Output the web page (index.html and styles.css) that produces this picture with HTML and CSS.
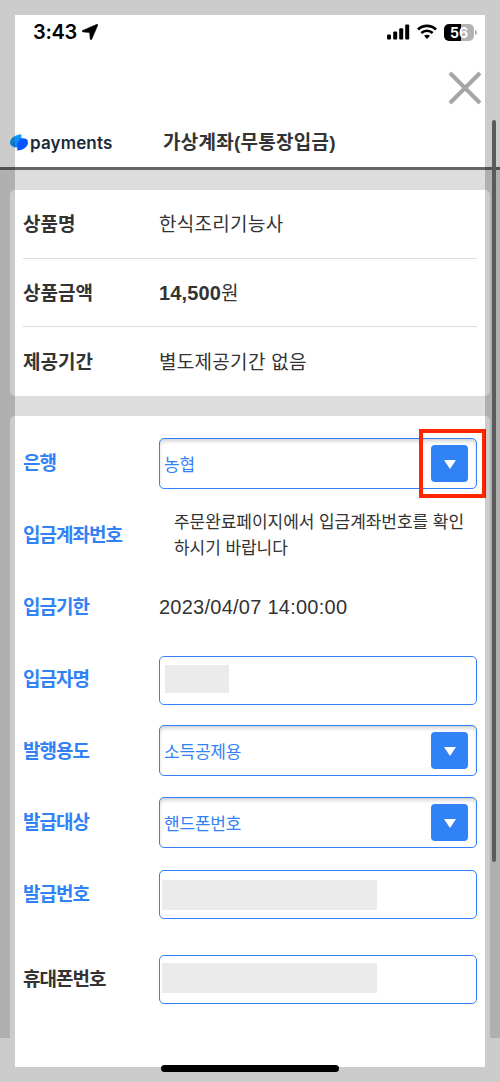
FILE: index.html
```html
<!DOCTYPE html>
<html lang="ko">
<head>
  <meta charset="UTF-8">
  <meta name="viewport" content="width=device-width, initial-scale=1.0">
  <title>가상계좌(무통장입금)</title>
  <link rel="stylesheet" href="styles.css">
</head>
<body>
  <div class="page">
    <div class="status-bar">
      <div class="status-left">
        <span class="time">3:43</span>
        <svg class="location" width="16" height="16" viewBox="0 0 16 16"><path d="M15 .3 .6 6.400c-.8.500-.6 1.400.3 1.500l6.700.700.6 6.500c.1.900 1.100 1 1.500.2L15.800 1.200C16 .5 15.700.1 15 .3z" stroke="#000" stroke-width=".5"/></svg>
      </div>
      <div class="status-right">
        <svg width="23" height="16" viewBox="0 0 23 16"><rect x="0" y="10.500" width="4" height="5" rx="1"/><rect x="6.200" y="7.500" width="4" height="8" rx="1"/><rect x="12.200" y="4.200" width="4" height="11.300" rx="1"/><rect x="18.200" y=".5" width="4" height="15" rx="1"/></svg>
        <svg width="20" height="16" viewBox="0 0 20 16"><path d="M1 5.400C6 .7 14 .7 19 5.400" fill="none" stroke="#000" stroke-width="2.800"/><path d="M4.300 9c3.300-3 8.100-3 11.400 0" fill="none" stroke="#000" stroke-width="2.700"/><path d="M7 11.800c1.700-1.500 4.300-1.500 6 0l-3 3.200z"/></svg>
        <div class="battery">56</div>
      </div>
    </div>

    <div class="close-row">
      <svg class="close" width="34" height="34" viewBox="0 0 34 34"><path d="M2 2 32 32M32 2 2 32" stroke="#a6a6a6" stroke-width="4"/></svg>
    </div>

    <header class="header">
      <div class="logo">
        <svg width="18" height="17" viewBox="0 0 18 17">
          <defs>
            <linearGradient id="front" x1="0" y1="0" x2="1" y2="1"><stop offset="0" stop-color="#12b5fc"/><stop offset="1" stop-color="#0872ff"/></linearGradient>
          </defs>
          <path d="M11.300.2v7.500L7.500 13.500C3.500 13.500 0 11.800 0 8.500 0 3.500 6.200.5 11.300.2z" fill="url(#front)"/>
          <path d="M10.800 4.500C15.500 3.800 18 5.500 18 8.300c0 4.500-4.700 7.800-10.700 8.300V9.500z" fill="#0b55ff"/>
        </svg>
        <span class="logo-text">payments</span>
      </div>
      <h1>가상계좌(무통장입금)</h1>
    </header>

    <main class="content">
      <section class="card product">
        <div class="row"><span class="label">상품명</span><span class="value">한식조리기능사</span></div>
        <div class="row"><span class="label">상품금액</span><span class="value"><b>14,500</b>원</span></div>
        <div class="row"><span class="label">제공기간</span><span class="value">별도제공기간 없음</span></div>
      </section>

      <section class="card form">
        <div class="row">
          <span class="label">은행</span>
          <div class="field select"><span>농협</span><div class="arrow"></div><div class="highlight"></div></div>
        </div>
        <div class="row">
          <span class="label">입금계좌번호</span>
          <p class="notice">주문완료페이지에서 입금계좌번호를 확인<br>하시기 바랍니다</p>
        </div>
        <div class="row">
          <span class="label">입금기한</span>
          <span class="date">2023/04/07 14:00:00</span>
        </div>
        <div class="row">
          <span class="label">입금자명</span>
          <div class="field name"><div class="mask short"></div></div>
        </div>
        <div class="row">
          <span class="label">발행용도</span>
          <div class="field select"><span>소득공제용</span><div class="arrow"></div></div>
        </div>
        <div class="row">
          <span class="label">발급대상</span>
          <div class="field select"><span>핸드폰번호</span><div class="arrow"></div></div>
        </div>
        <div class="row">
          <span class="label">발급번호</span>
          <div class="field"><div class="mask"></div></div>
        </div>
        <div class="row phone">
          <span class="label">휴대폰번호</span>
          <div class="field"><div class="mask"></div></div>
        </div>
      </section>
    </main>

    <div class="scrollbar"></div>
    <div class="frame"></div>
    <div class="home-bar"></div>
  </div>
</body>
</html>
```

FILE: styles.css
```css
* {
  margin: 0;
  padding: 0;
  box-sizing: border-box;
}

body {
  background: #fff;
  color: #333;
  font-family: "Liberation Sans", "Noto Sans CJK KR", sans-serif;
}

.page {
  position: relative;
  height: 1082px;
  overflow: hidden;
}

/* Status bar */
.status-bar {
  display: flex;
  justify-content: space-between;
  height: 64px;
  padding: 24px 26px 0 33px;
}

.status-left,
.status-right {
  display: flex;
  align-items: center;
  height: 16px;
}

.time {
  color: #000;
  font-family: Inter, sans-serif;
  font-size: 20px;
  font-weight: 600;
  letter-spacing: -0.3px;
}

.location {
  margin-left: 5px;
}

.status-right {
  gap: 7px;
}

.battery {
  position: relative;
  width: 30px;
  height: 17px;
  border-radius: 5px;
  background: linear-gradient(90deg, #000 56%, #b3b3b3 56%);
  color: #fff;
  font: 700 14px/17px Inter, sans-serif;
  text-align: center;
}

.battery::after {
  content: "";
  position: absolute;
  left: 31px;
  top: 6px;
  width: 2px;
  height: 5px;
  border-radius: 0 2px 2px 0;
  background: #b3b3b3;
}

/* Header */
.close-row {
  display: flex;
  justify-content: flex-end;
  height: 54px;
  padding: 7px 18px 0 0;
}

.header {
  display: flex;
  align-items: center;
  height: 52px;
  padding: 0 10px;
  border-bottom: 3px solid #666;
}

.logo {
  display: flex;
  align-items: center;
  gap: 2px;
  width: 153px;
}

.logo-text {
  color: #20293a;
  font: 600 17px/20px Inter, sans-serif;
  letter-spacing: 0.15px;
}

h1 {
  padding-top: 1px;
  font-size: 19px;
  font-weight: 700;
  line-height: 24px;
  letter-spacing: 0.25px;
  white-space: nowrap;
}

/* Cards */
.content {
  height: 868px;
  padding: 20px 10px 0;
  background: #ddd;
}

.card {
  padding: 0 13px;
  border-radius: 5px;
  background: #fff;
}

.row {
  display: flex;
  align-items: center;
}

.label {
  flex: none;
  width: 136px;
  padding-top: 2px;
  font-size: 19px;
  font-weight: 700;
  line-height: 24px;
}

.product .row {
  height: 69px;
  border-bottom: 1px solid #ddd;
}

.product .row:nth-child(2) {
  height: 68px;
}

.product .row:last-child {
  border-bottom: none;
}

.value {
  padding-top: 2px;
  font-size: 19px;
  line-height: 24px;
  letter-spacing: 0.3px;
}

.value b {
  font-size: 20px;
  font-weight: 700;
  letter-spacing: 0.15px;
}

.form {
  height: 622px;
  margin-top: 20px;
  padding-top: 11.6px;
  border-radius: 5px 5px 0 0;
}

.form .row {
  height: 71.8px;
}

.form .label {
  color: #3182f6;
  letter-spacing: -1px;
}

.form .phone {
  margin-top: 13px;
}

.form .phone .label {
  color: #333;
}

.field {
  display: flex;
  align-items: center;
  width: 318px;
  height: 49px;
  padding-left: 2px;
  border: 1px solid #3182f6;
  border-radius: 5px;
}

.field.name {
  margin-top: 3px;
}

.select {
  position: relative;
  justify-content: space-between;
  height: 51px;
  padding: 0 8px 0 4px;
  box-shadow: inset 0 3px 4px -1px rgba(0, 0, 0, 0.2);
  color: #3182f6;
  font-size: 17px;
  letter-spacing: -0.2px;
}

.arrow {
  display: flex;
  align-items: center;
  justify-content: center;
  width: 37px;
  height: 37px;
  border-radius: 4px;
  background: #3182f6;
}

.arrow::before {
  content: "";
  margin-top: 2px;
  border: 6px solid transparent;
  border-top: 9px solid #fff;
  border-bottom: 0;
}

.highlight {
  position: absolute;
  top: -10px;
  right: -10px;
  width: 67px;
  height: 69px;
  border: 4px solid #ff2600;
}

.notice {
  padding: 1px 0 0 15px;
  font-size: 17px;
  line-height: 26px;
  letter-spacing: -0.05px;
  white-space: nowrap;
}

.date {
  font-size: 20px;
  letter-spacing: 0.25px;
}

.mask {
  width: 215px;
  height: 30px;
  margin-top: 2px;
  background: #ebebeb;
}

.mask.short {
  width: 64px;
  height: 28px;
  margin: -3px 0 0 3px;
}

.phone .mask {
  margin-top: -2px;
}

/* Things over the page */
.scrollbar {
  position: absolute;
  top: 120px;
  right: 4px;
  width: 4px;
  height: 742px;
  border-radius: 2px;
  background: #727272;
}

.frame {
  position: absolute;
  inset: 0;
  border: 15px solid rgba(0, 0, 0, 0.2);
}

.home-bar {
  position: absolute;
  left: 161px;
  bottom: 10px;
  width: 178px;
  height: 7px;
  border-radius: 4px;
  background: #000;
}
```
